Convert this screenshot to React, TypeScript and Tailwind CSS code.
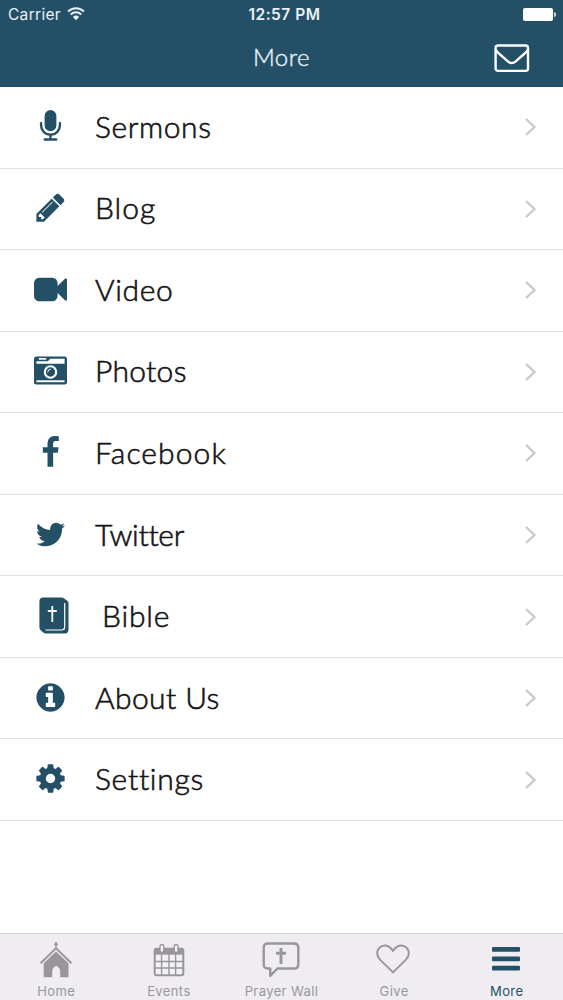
import * as React from "react";
import { clsx } from "clsx";

interface IconProps {
  className?: string;
}

/** Solid glyph on a 1792 unit grid */
function Glyph({ d, className }: IconProps & { d: string }) {
  return (
    <svg viewBox="0 0 1792 1792" fill="currentColor" className={className} aria-hidden="true">
      <path d={d} />
    </svg>
  );
}

const MICROPHONE =
  "M1472 704v128q0 221-147.5 384.5t-364.5 187.5v132h256q26 0 45 19t19 45-19 45-45 19h-640q-26 0-45-19t-19-45 19-45 45-19h256v-132q-217-24-364.5-187.5t-147.5-384.5v-128q0-26 19-45t45-19 45 19 19 45v128q0 185 131.5 316.5t316.5 131.5 316.5-131.5 131.5-316.5v-128q0-26 19-45t45-19 45 19 19 45zm-256-384v512q0 132-94 226t-226 94-226-94-94-226v-512q0-132 94-226t226-94 226 94 94 226z";
const PENCIL =
  "M491 1536l91-91-235-235-91 91v107h128v128h107zm523-928q0-22-22-22-10 0-17 7l-542 542q-7 7-7 17 0 22 22 22 10 0 17-7l542-542q7-7 7-17zm-54-192l416 416-832 832h-416v-416zm683 96q0 53-37 90l-166 166-416-416 166-165q36-38 90-38 53 0 91 38l235 234q37 39 37 91z";
const VIDEO =
  "M1792 352v1088q0 42-39 59-13 5-25 5-27 0-45-19l-403-403v166q0 119-84.5 203.5t-203.5 84.5h-704q-119 0-203.5-84.5t-84.5-203.5v-704q0-119 84.5-203.5t203.5-84.5h704q119 0 203.5 84.5t84.5 203.5v165l403-402q18-19 45-19 12 0 25 5 39 17 39 59z";
const FACEBOOK =
  "M1343 12v264h-157q-86 0-116 36t-30 108v189h293l-39 296h-254v759h-306v-759h-255v-296h255v-218q0-186 104-288.5t277-102.5q147 0 228 12z";
const TWITTER =
  "M1684 408q-67 98-162 167 1 14 1 42 0 130-38 259.5t-115.5 248.5-184.5 210.5-258 146-323 54.5q-271 0-496-145 35 4 78 4 225 0 401-138-105-2-188-64.5t-114-159.5q33 5 61 5 43 0 85-11-112-23-185.5-111.5t-73.5-205.5v-4q68 38 146 41-66-44-105-115t-39-154q0-88 44-163 121 149 294.5 238.5t371.5 99.5q-8-38-8-74 0-134 94.5-228.5t228.5-94.5q140 0 236 102 109-21 205-78-37 115-142 178 93-10 186-50z";
const INFO =
  "M1152 1376v-160q0-14-9-23t-23-9h-96v-512q0-14-9-23t-23-9h-320q-14 0-23 9t-9 23v160q0 14 9 23t23 9h96v320h-96q-14 0-23 9t-9 23v160q0 14 9 23t23 9h448q14 0 23-9t9-23zm-128-896v-160q0-14-9-23t-23-9h-192q-14 0-23 9t-9 23v160q0 14 9 23t23 9h192q14 0 23-9t9-23zm640 416q0 209-103 385.5t-279.5 279.5-385.5 103-385.5-103-279.5-279.5-103-385.5 103-385.5 279.5-279.5 385.5-103 385.5 103 279.5 279.5 103 385.5z";
const COG =
  "M1152 896q0-106-75-181t-181-75-181 75-75 181 75 181 181 75 181-75 75-181zm512-109v222q0 12-8 23t-20 13l-185 28q-19 54-39 91 35 50 107 138 10 12 10 25t-9 23q-27 37-99 108t-94 71q-12 0-26-9l-138-108q-44 23-91 38-16 136-29 186-7 28-36 28h-222q-14 0-24.5-8.5t-11.5-21.5l-28-184q-49-16-90-37l-141 107q-10 9-25 9-14 0-25-11-126-114-165-168-7-10-7-23 0-12 8-23 15-21 51-66.5t54-70.5q-27-50-41-99l-183-27q-13-2-21-12.5t-8-23.5v-222q0-12 8-23t19-13l186-28q14-46 39-92-40-57-107-138-10-12-10-24 0-10 9-23 26-36 98.5-107.5t94.5-71.5q13 0 26 10l138 107q44-23 91-38 16-136 29-186 7-28 36-28h222q14 0 24.5 8.5t11.5 21.5l28 184q49 16 90 37l142-107q9-9 24-9 13 0 25 10 129 119 165 170 7 8 7 22 0 12-8 23-15 21-51 66.5t-54 70.5q26 50 41 98l183 28q13 2 21 12.5t8 23.5z";

function CameraIcon({ className }: IconProps) {
  return (
    <svg viewBox="0 0 33 33" className={className} aria-hidden="true">
      <rect x="0" y="2.6" width="33" height="28" rx="2.4" fill="currentColor" />
      <g fill="#fff">
        <rect x="4.8" y="4" width="7.4" height="1.7" />
        <path d="M2.4 7.2h11.5l2.4-2.5h14.3v5H2.4z" />
        <rect x="2.4" y="26.3" width="28.2" height="1.9" />
      </g>
      <circle cx="16.5" cy="18" r="7.8" fill="currentColor" />
      <circle cx="16.5" cy="18" r="5.7" fill="none" stroke="#fff" strokeWidth="2.1" />
      <path d="M13.7 18a2.8 2.8 0 0 1 2.8-2.8" fill="none" stroke="#fff" strokeWidth="1" strokeLinecap="round" />
    </svg>
  );
}

function BibleIcon({ className }: IconProps) {
  return (
    <svg viewBox="0 0 30 37" className={className} aria-hidden="true">
      <path
        d="M4.5 .4h18.2q2 0 3.2 1.5l2.6 2q1 .9 1 2.5v26.4q0 3.7-3.8 3.7H7.2q-1.8 0-3-1.1l-2.5-2.2Q.4 32 .4 30.2V4.5Q.4 .4 4.5 .4z"
        fill="currentColor"
      />
      <path d="M25.7 6v23.5q0 3.5-3.5 3.5H6.5" fill="none" stroke="#fff" strokeWidth="1.2" />
      <path d="M24 32.6q1.7-1.2 1.7-3.1v3.1z" fill="#fff" />
      <path d="M13.3 9v16M8.8 14h9" fill="none" stroke="#fff" strokeWidth="1.8" />
    </svg>
  );
}

function WifiIcon({ className }: IconProps) {
  return (
    <svg viewBox="0 0 18 14" fill="none" stroke="currentColor" strokeWidth="2" className={className} aria-hidden="true">
      <path d="M1.1 4.5a11.3 11.3 0 0 1 15.8 0" />
      <path d="M3.8 7.5a7.4 7.4 0 0 1 10.4 0" />
      <path d="M9 13.2l-3.1-3.3a4.3 4.3 0 0 1 6.2 0z" fill="currentColor" stroke="none" />
    </svg>
  );
}

function MailIcon({ className }: IconProps) {
  return (
    <svg viewBox="0 0 36 29" fill="none" stroke="currentColor" strokeWidth="2.4" strokeLinejoin="round" className={className} aria-hidden="true">
      <rect x="1.6" y="1.5" width="32.4" height="25.4" rx="2.4" />
      <path d="M2 6.2Q3 8 5.5 10L14.2 17.6Q17.8 20.6 21.4 17.6L30.1 10Q32.6 8 33.6 6.2" />
    </svg>
  );
}

function HomeIcon({ className }: IconProps) {
  return (
    <svg viewBox="0 0 34 38" className={className} aria-hidden="true">
      <path d="M17 1v6M15 3.2h4" stroke="currentColor" strokeWidth="1.6" fill="none" />
      <path d="M1.5 22.2L17 7.3l15.5 14.9" stroke="currentColor" strokeWidth="2" fill="none" />
      <path d="M4.7 22.3L17 10.4l12.5 11.9v13.9h-8.3v-5.7q0-3.3-4-6-4 2.7-4 6v5.7H4.7z" fill="currentColor" />
    </svg>
  );
}

function CalendarIcon({ className }: IconProps) {
  return (
    <svg viewBox="0 0 32 34" className={className} aria-hidden="true">
      <rect x="1.7" y="5.7" width="28.6" height="26.6" rx="1.8" fill="#f3f1f5" stroke="currentColor" strokeWidth="2" />
      <path d="M1.7 6h28.6v5.7H1.7z" fill="currentColor" />
      <path d="M8.6 11v21M16 11v21M22.6 11v21M2 18.5h28M2 25h28" stroke="currentColor" strokeWidth="1.4" />
      <rect x="7" y="1.5" width="3.8" height="8" rx="1.9" fill="#f3f1f5" stroke="currentColor" strokeWidth="1.3" />
      <rect x="21.2" y="1.5" width="3.8" height="8" rx="1.9" fill="#f3f1f5" stroke="currentColor" strokeWidth="1.3" />
    </svg>
  );
}

function PrayerIcon({ className }: IconProps) {
  return (
    <svg viewBox="0 0 38 36" fill="none" stroke="currentColor" className={className} aria-hidden="true">
      <path
        d="M6 1.5h26q4.3 0 4.3 4.3v16.4q0 4.3-4.3 4.3H15.4l-7.2 7.3v-7.3H6q-4.3 0-4.3-4.3V5.8Q1.7 1.5 6 1.5z"
        strokeWidth="2.4"
        strokeLinejoin="round"
      />
      <path d="M19 6v16M14 11.2h10" strokeWidth="2.9" />
    </svg>
  );
}

function HeartIcon({ className }: IconProps) {
  return (
    <svg viewBox="0 0 34 30" fill="none" stroke="currentColor" strokeWidth="2" strokeLinejoin="round" className={className} aria-hidden="true">
      <path d="M17 28.4L4 15.6C1.8 13.4 1.2 11.5 1.2 9.3c0-4.5 3.3-7.8 7.6-7.8 3.3 0 5.9 2 8.2 5.4 2.3-3.4 4.9-5.4 8.2-5.4 4.3 0 7.6 3.3 7.6 7.8 0 2.2-.6 4.1-2.8 6.3z" />
    </svg>
  );
}

function BarsIcon({ className }: IconProps) {
  return (
    <svg viewBox="0 0 28 24" fill="currentColor" className={className} aria-hidden="true">
      <rect y="0" width="28" height="4.8" rx="1" />
      <rect y="9.4" width="28" height="4.8" rx="1" />
      <rect y="18.8" width="28" height="4.8" rx="1" />
    </svg>
  );
}

interface MenuItem {
  label: string;
  icon: React.ReactNode;
  /** Label offset and letter fit */
  labelClass: string;
}

const ICON = "mt-px block size-[33px]";

const MENU_ITEMS: MenuItem[] = [
  { label: "Sermons", icon: <Glyph d={MICROPHONE} className={ICON} />, labelClass: "tracking-[0.6px]" },
  { label: "Blog", icon: <Glyph d={PENCIL} className={ICON} />, labelClass: "tracking-[1px]" },
  { label: "Video", icon: <Glyph d={VIDEO} className={ICON} />, labelClass: "tracking-[0.6px]" },
  { label: "Photos", icon: <CameraIcon className={ICON} />, labelClass: "tracking-[0.3px]" },
  { label: "Facebook", icon: <Glyph d={FACEBOOK} className={ICON} />, labelClass: "tracking-[1.1px]" },
  { label: "Twitter", icon: <Glyph d={TWITTER} className={ICON} />, labelClass: "tracking-[-0.3px]" },
  { label: "Bible", icon: <BibleIcon className="ml-[5px] block h-[37px] w-[30px]" />, labelClass: "pl-[7px] tracking-[0.8px]" },
  { label: "About Us", icon: <Glyph d={INFO} className={ICON} />, labelClass: "tracking-[0.4px]" },
  { label: "Settings", icon: <Glyph d={COG} className={ICON} />, labelClass: "tracking-[0.7px]" },
];

const TABS = [
  { label: "Home", icon: <HomeIcon className="mt-px h-[38px] w-[34px]" /> },
  { label: "Events", icon: <CalendarIcon className="mt-px h-[34px] w-[32px]" /> },
  { label: "Prayer Wall", icon: <PrayerIcon className="mt-px h-[36px] w-[38px]" /> },
  { label: "Give", icon: <HeartIcon className="mr-[2px] h-[30px] w-[34px]" /> },
  { label: "More", icon: <BarsIcon className="mr-[2px] h-[24px] w-[28px]" />, active: true },
];

function Header() {
  return (
    <header className="h-[87px] shrink-0 bg-[#235067] text-white">
      <div className="grid h-7 grid-cols-3 items-center pl-2 pr-[7px] font-['Inter',sans-serif] text-[15.5px] text-[#e9f1f8]">
        <div className="flex items-center gap-[6px]">
          <span className="mt-[2px] tracking-[0.3px]">Carrier</span>
          <WifiIcon className="h-[14px] w-[18px]" />
        </div>
        <span className="mt-[2px] pl-[5px] text-center font-semibold tracking-[0.5px] whitespace-nowrap">12:57 PM</span>
        <div className="flex items-center justify-end gap-px text-white">
          <span className="h-[13px] w-[30px] rounded-[2px] bg-current" />
          <span className="h-[5px] w-[2px] rounded-r-full bg-current opacity-80" />
        </div>
      </div>
      <div className="grid h-[59px] grid-cols-[1fr_auto_1fr] items-center pr-[33px]">
        <h1 className="col-start-2 mb-[2px] pl-[33px] font-['Lato',sans-serif] text-[24px] font-light tracking-[0.5px] text-[#e9f1f8] [-webkit-text-stroke:0.4px_currentColor]">
          More
        </h1>
        <MailIcon className="mt-px h-[29px] w-[36px] justify-self-end" />
      </div>
    </header>
  );
}

function MenuRow({ label, icon, labelClass }: MenuItem) {
  return (
    <li className="flex h-[81.55px] items-center border-b border-[#e0dfe2] pl-[34px] pr-[26px]">
      <span className="mb-[3px] w-[61px] shrink-0 text-[#235067]">{icon}</span>
      <span
        className={clsx(
          "mb-[2px] flex-1 font-['Lato',sans-serif] text-[30px] font-light text-[#151316] [-webkit-text-stroke:0.6px_currentColor]",
          labelClass
        )}
      >
        {label}
      </span>
      <svg viewBox="0 0 13 20" className="h-[20px] w-[13px] text-[#c9c7cb]" fill="none" stroke="currentColor" strokeWidth="2.3" aria-hidden="true">
        <path d="M2 2l8.5 8L2 18" />
      </svg>
    </li>
  );
}

function TabBar() {
  return (
    <nav className="grid h-[67px] shrink-0 grid-cols-5 border-t border-[#d6d4d9] bg-[#efedf1] font-['Inter',sans-serif]">
      {TABS.map((tab) => (
        <div key={tab.label} className={clsx("flex flex-col items-center", tab.active ? "text-[#235067]" : "text-[#98969b]")}>
          <span className="flex h-[50px] items-center justify-center">{tab.icon}</span>
          <span className="text-[13px] leading-[14px] tracking-[0.4px] whitespace-nowrap">{tab.label}</span>
        </div>
      ))}
    </nav>
  );
}

export default function App() {
  return (
    <div className="flex h-screen w-full flex-col overflow-hidden bg-white">
      <Header />
      <ul className="flex-1">
        {MENU_ITEMS.map((item) => (
          <MenuRow key={item.label} {...item} />
        ))}
      </ul>
      <TabBar />
    </div>
  );
}
